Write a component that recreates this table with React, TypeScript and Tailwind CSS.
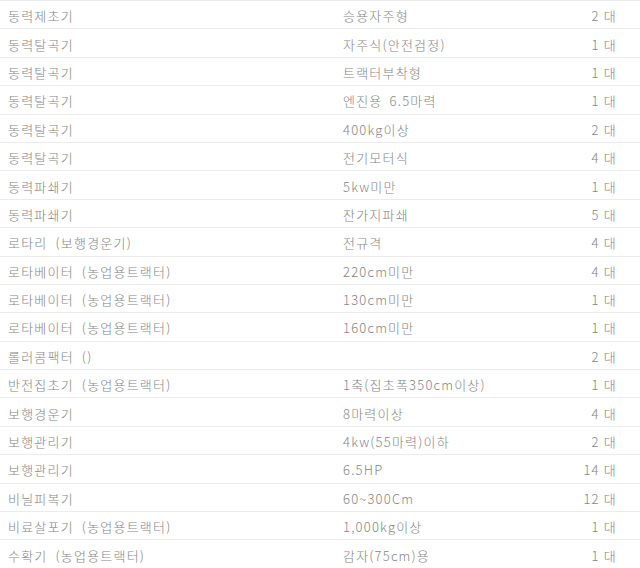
import React from "react";

const rows: [string, string, string][] = [
  ["동력제초기", "승용자주형", "2 대"],
  ["동력탈곡기", "자주식(안전검정)", "1 대"],
  ["동력탈곡기", "트랙터부착형", "1 대"],
  ["동력탈곡기", "엔진용 6.5마력", "1 대"],
  ["동력탈곡기", "400kg이상", "2 대"],
  ["동력탈곡기", "전기모터식", "4 대"],
  ["동력파쇄기", "5kw미만", "1 대"],
  ["동력파쇄기", "잔가지파쇄", "5 대"],
  ["로타리 (보행경운기)", "전규격", "4 대"],
  ["로타베이터 (농업용트랙터)", "220cm미만", "4 대"],
  ["로타베이터 (농업용트랙터)", "130cm미만", "1 대"],
  ["로타베이터 (농업용트랙터)", "160cm미만", "1 대"],
  ["롤러콤팩터 ()", "", "2 대"],
  ["반전집초기 (농업용트랙터)", "1축(집초폭350cm이상)", "1 대"],
  ["보행경운기", "8마력이상", "4 대"],
  ["보행관리기", "4kw(55마력)이하", "2 대"],
  ["보행관리기", "6.5HP", "14 대"],
  ["비닐피복기", "60~300Cm", "12 대"],
  ["비료살포기 (농업용트랙터)", "1,000kg이상", "1 대"],
  ["수확기 (농업용트랙터)", "감자(75cm)용", "1 대"],
];

export default function App() {
  return (
    <div
      className="w-[640px] h-[568px] overflow-hidden bg-white text-[13px] text-[#858585] font-light tracking-[1.2px]"
      style={{ fontFamily: '"Noto Sans CJK KR", "Noto Sans", sans-serif' }}
    >
      {rows.map((r, i) => (
        <div
          key={i}
          className="flex items-center h-[28.4px] border-t border-[#ebebeb] box-border leading-none"
        >
          <div className="w-[343px] pl-2 pt-[2px] whitespace-nowrap [word-spacing:4px]">{r[0]}</div>
          <div className="flex-1 pt-[2px] whitespace-nowrap [word-spacing:3px]">{r[1]}</div>
          <div className="w-[90px] pr-[23px] pt-[2px] text-right whitespace-nowrap">{r[2]}</div>
        </div>
      ))}
    </div>
  );
}
